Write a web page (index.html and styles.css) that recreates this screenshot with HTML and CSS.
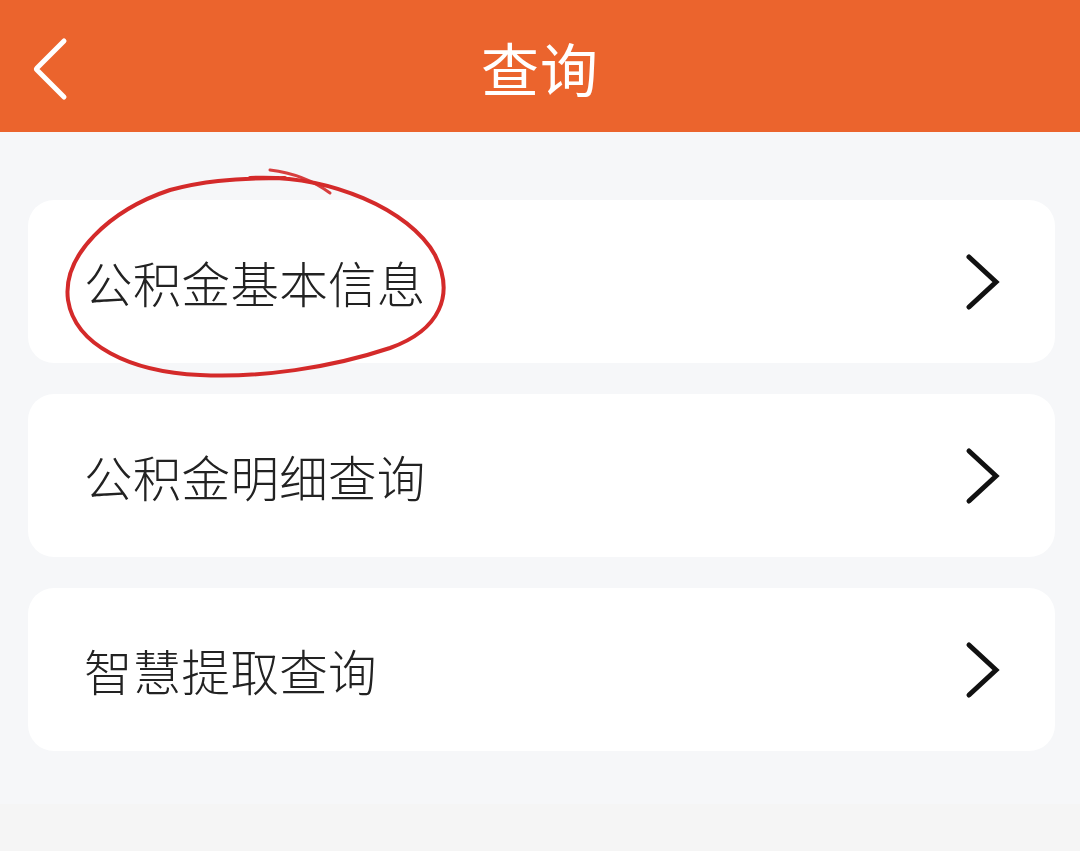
FILE: index.html
```html
<!DOCTYPE html>
<html lang="zh">
<head>
<meta charset="utf-8">
<link rel="stylesheet" href="styles.css">
</head>
<body>
<div class="page">
  <header class="topbar">
    <svg class="back" width="40" height="64" viewBox="0 0 40 64"><path d="M33 4 L6 31 Q5 32 6 33 L33 60" fill="none" stroke="#fff" stroke-width="5" stroke-linecap="round" stroke-linejoin="round"/></svg>
    <h1 class="title">查询</h1>
  </header>
  <main class="list">
    <div class="card"><span class="label">公积金基本信息</span><svg class="arrow" width="40" height="60" viewBox="0 0 40 60"><path d="M5 5 L32 30 L5 55" fill="none" stroke="#111" stroke-width="5" stroke-linecap="round" stroke-linejoin="miter"/></svg></div>
    <div class="card"><span class="label">公积金明细查询</span><svg class="arrow" width="40" height="60" viewBox="0 0 40 60"><path d="M5 5 L32 30 L5 55" fill="none" stroke="#111" stroke-width="5" stroke-linecap="round" stroke-linejoin="miter"/></svg></div>
    <div class="card"><span class="label">智慧提取查询</span><svg class="arrow" width="40" height="60" viewBox="0 0 40 60"><path d="M5 5 L32 30 L5 55" fill="none" stroke="#111" stroke-width="5" stroke-linecap="round" stroke-linejoin="miter"/></svg></div>
  </main>
  <div class="bottom"></div>
  <svg class="circle" width="480" height="230" viewBox="0 0 480 230">
    <path d="M250 18 C 330 14, 410 50, 435 95 C 455 135, 440 170, 390 188 C 330 208, 260 218, 200 215 C 130 212, 75 185, 68 140 C 62 95, 110 50, 170 30 C 200 22, 230 18, 285 18" fill="none" stroke="#d42a2a" stroke-width="4" stroke-linecap="round"/>
    <path d="M270 10 C 295 13, 315 22, 330 33" fill="none" stroke="#d42a2a" stroke-width="3" stroke-linecap="round" opacity="0.9"/>
  </svg>
</div>
</body>
</html>
```
FILE: styles.css
```css
* { box-sizing: border-box; margin: 0; padding: 0; }
html, body { width: 1080px; height: 851px; overflow: hidden; }
body { background: #f5f5f5; font-family: "Noto Sans CJK SC", "Noto Sans", sans-serif; }
.page { position: relative; width: 1080px; height: 851px; display: flex; flex-direction: column; }
.topbar {
  height: 132px; background: #eb642d; display: flex; align-items: center; justify-content: center;
  position: relative; flex-shrink: 0;
}
.back { position: absolute; left: 31px; top: 37px; }
.title { color: #fff; font-size: 58px; font-weight: 400; letter-spacing: 1px; line-height: 1; margin-top: 2px; }
.list {
  background: #f6f7f9; padding: 68px 25px 53px 28px; display: flex; flex-direction: column; gap: 31px;
}
.card {
  height: 163px; background: #fff; border-radius: 26px; display: flex; align-items: center;
  justify-content: space-between; padding: 0 51px 0 56px;
}
.label { font-size: 48.5px; font-weight: 300; color: #222; letter-spacing: 0.3px; }
.arrow { flex-shrink: 0; }
.bottom { flex: 1; background: #f5f5f5; }
.circle { position: absolute; left: 0; top: 160px; }
```
